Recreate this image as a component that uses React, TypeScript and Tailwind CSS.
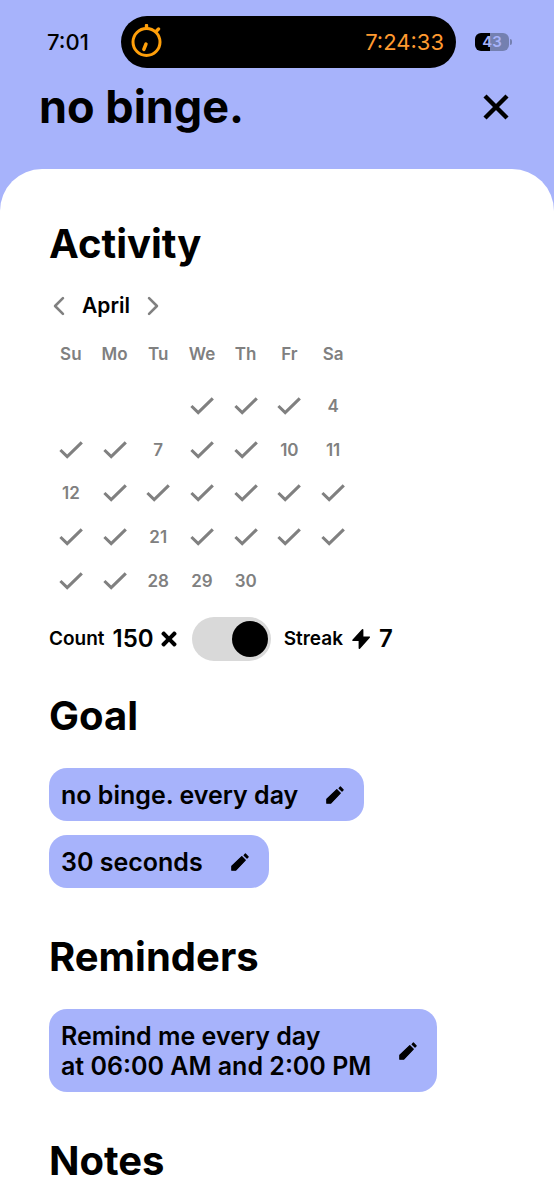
import { useState } from "react";
import { FaTimes } from "react-icons/fa";
import { IoChevronBack, IoChevronForward } from "react-icons/io5";

const WEEKDAYS = ["Su", "Mo", "Tu", "We", "Th", "Fr", "Sa"];
const FIRST_DAY = 3;
const DAYS_IN_MONTH = 30;
const OPEN_DAYS = [4, 7, 10, 11, 12, 21, 28, 29, 30];

const buildWeeks = () => {
  const cells: (number | null)[] = Array(FIRST_DAY).fill(null);
  for (let d = 1; d <= DAYS_IN_MONTH; d++) cells.push(d);
  while (cells.length % 7 !== 0) cells.push(null);

  const weeks: (number | null)[][] = [];
  for (let i = 0; i < cells.length; i += 7) weeks.push(cells.slice(i, i + 7));
  return weeks;
};

const CheckIcon = ({ label }: { label: string }) => {
  return (
    <svg role="img" aria-label={label} viewBox="0 0 24 18" className="w-6 h-[18px]" fill="none" stroke="currentColor" strokeWidth="3.1">
      <path d="M1.4 9L8.2 15.6 22.8 1.4" />
    </svg>
  );
};

const CloseIcon = () => {
  return (
    <svg viewBox="0 0 28 28" className="size-7" fill="none" stroke="currentColor" strokeWidth="4.4">
      <path d="M3 3l22 22M25 3L3 25" />
    </svg>
  );
};

const PencilIcon = () => {
  return (
    <svg viewBox="0 0 18 18" className="size-[18px] shrink-0" fill="currentColor" stroke="currentColor" strokeWidth="1.2" strokeLinejoin="round">
      <path d="M.8 17.2v-4L10.8 3.6l3.5 3.6L4.8 17.2z" />
      <path d="M13.1 2.3L14.4 1 17.2 3.8 16 5.1z" />
    </svg>
  );
};

const BoltIcon = () => {
  return (
    <svg viewBox="0 0 20 22" className="w-5 h-[22px]" fill="currentColor" stroke="currentColor" strokeWidth="1.6" strokeLinejoin="round">
      <path d="M11.6 1.8L2 12.2h6.4v8L18.2 9.2h-6.6z" />
    </svg>
  );
};

const StatusBar = () => {
  return (
    <div className="flex items-center h-[52px] mt-4 pl-[47px] pr-[42px]">
      <span className="w-[74px] text-[22px] leading-7 font-medium">7:01</span>

      <div className="flex-1 h-full flex items-center justify-between rounded-full bg-black pl-[10px] pr-3">
        <svg viewBox="0 0 32 36" className="w-8 h-9" fill="none" stroke="#ff9f0a" strokeLinecap="round">
          <circle cx="15.5" cy="18" r="13.5" strokeWidth="3" />
          <path d="M15.5 4V1.5M25.5 7l2-2" strokeWidth="3.4" />
          <path d="M15 20l-2.2 5.5" strokeWidth="3.4" />
        </svg>
        <span className="text-[22px] leading-7 text-[#ff9a30]">7:24:33</span>
      </div>

      <div className="flex items-center ml-[19px] gap-px">
        <div className="w-[34px] h-[18px] rounded-md text-center text-[15px] leading-[18px] font-semibold text-[#a7b3fb] bg-linear-to-r from-black from-44% to-[#7480b0] to-44%">
          43
        </div>
        <div className="w-[2px] h-[6px] rounded-r-full bg-[#7480b0]" />
      </div>
    </div>
  );
};

const Calendar = () => {
  return (
    <table className="w-[306px] table-fixed border-collapse text-[17px] leading-5 text-[#808080] font-semibold">
      <thead>
        <tr className="h-[62px]">
          {WEEKDAYS.map((day) => (
            <th key={day} scope="col" className="p-0 pt-0.5 font-semibold">
              {day}
            </th>
          ))}
        </tr>
      </thead>
      <tbody>
        {buildWeeks().map((week, i) => (
          <tr key={i}>
            {week.map((day, j) => (
              <td key={j} className="p-0">
                <div className="aspect-square flex items-center justify-center">
                  {day !== null && (OPEN_DAYS.includes(day) ? day : <CheckIcon label={`${day} done`} />)}
                </div>
              </td>
            ))}
          </tr>
        ))}
      </tbody>
    </table>
  );
};

const EditPill = ({ lines }: { lines: string[] }) => {
  return (
    <button className="flex items-center gap-7 rounded-[18px] bg-[#a7b3fb] pt-3 pb-[11px] pl-3 pr-5 text-left text-[25px] leading-[30px] font-semibold">
      <span>
        {lines.map((line) => (
          <span key={line} className="block">
            {line}
          </span>
        ))}
      </span>
      <PencilIcon />
    </button>
  );
};

const Heading = ({ children }: { children: string }) => {
  return <h2 className="text-[40px] leading-[50px] font-bold">{children}</h2>;
};

const App = () => {
  const [streak, setStreak] = useState(true);

  return (
    <div className="min-h-screen flex flex-col bg-[#a7b3fb] text-black font-['Inter','Liberation_Sans',sans-serif]">
      <StatusBar />

      <header className="flex items-center justify-between h-[78px] mb-[23px] pl-[39px] pr-11">
        <h1 className="text-[45px] leading-[56px] font-bold">no binge.</h1>
        <button aria-label="Close">
          <CloseIcon />
        </button>
      </header>

      <main className="flex-1 rounded-t-[42px] bg-white pt-[50px] px-[49px]">
        <section>
          <Heading>Activity</Heading>

          <div className="flex items-center h-8 mt-[21px] -ml-1">
            <button aria-label="Previous month" className="text-[#808080]">
              <IoChevronBack className="size-7" />
            </button>
            <span className="mx-[9px] text-[21px] leading-8 font-semibold">April</span>
            <button aria-label="Next month" className="text-[#808080]">
              <IoChevronForward className="size-7" />
            </button>
          </div>

          <Calendar />

          <div className="flex items-center mt-[14px] font-semibold">
            <span className="text-[19px] leading-7">Count</span>
            <span className="ml-2 text-[24px] leading-8">150</span>
            <FaTimes className="ml-1 size-[22px]" />
            <input
              type="checkbox"
              role="switch"
              aria-label="Show streak"
              checked={streak}
              onChange={() => setStreak(!streak)}
              className="appearance-none w-[79px] h-11 ml-3 p-[3px] flex items-center rounded-full bg-[#d9d9d9] before:size-9 before:rounded-full before:bg-black checked:justify-end"
            />
            <span className="ml-[13px] text-[19px] leading-7">Streak</span>
            <span className="ml-2">
              <BoltIcon />
            </span>
            <span className="ml-2 text-[24px] leading-8">7</span>
          </div>
        </section>

        <section className="mt-[30px]">
          <Heading>Goal</Heading>
          <div className="flex flex-col items-start gap-[14px] mt-[27px]">
            <EditPill lines={["no binge. every day"]} />
            <EditPill lines={["30 seconds"]} />
          </div>
        </section>

        <section className="mt-11">
          <Heading>Reminders</Heading>
          <div className="flex mt-[27px]">
            <EditPill lines={["Remind me every day", "at 06:00 AM and 2:00 PM"]} />
          </div>
        </section>

        <section className="mt-11">
          <Heading>Notes</Heading>
        </section>
      </main>
    </div>
  );
};

export default App;
